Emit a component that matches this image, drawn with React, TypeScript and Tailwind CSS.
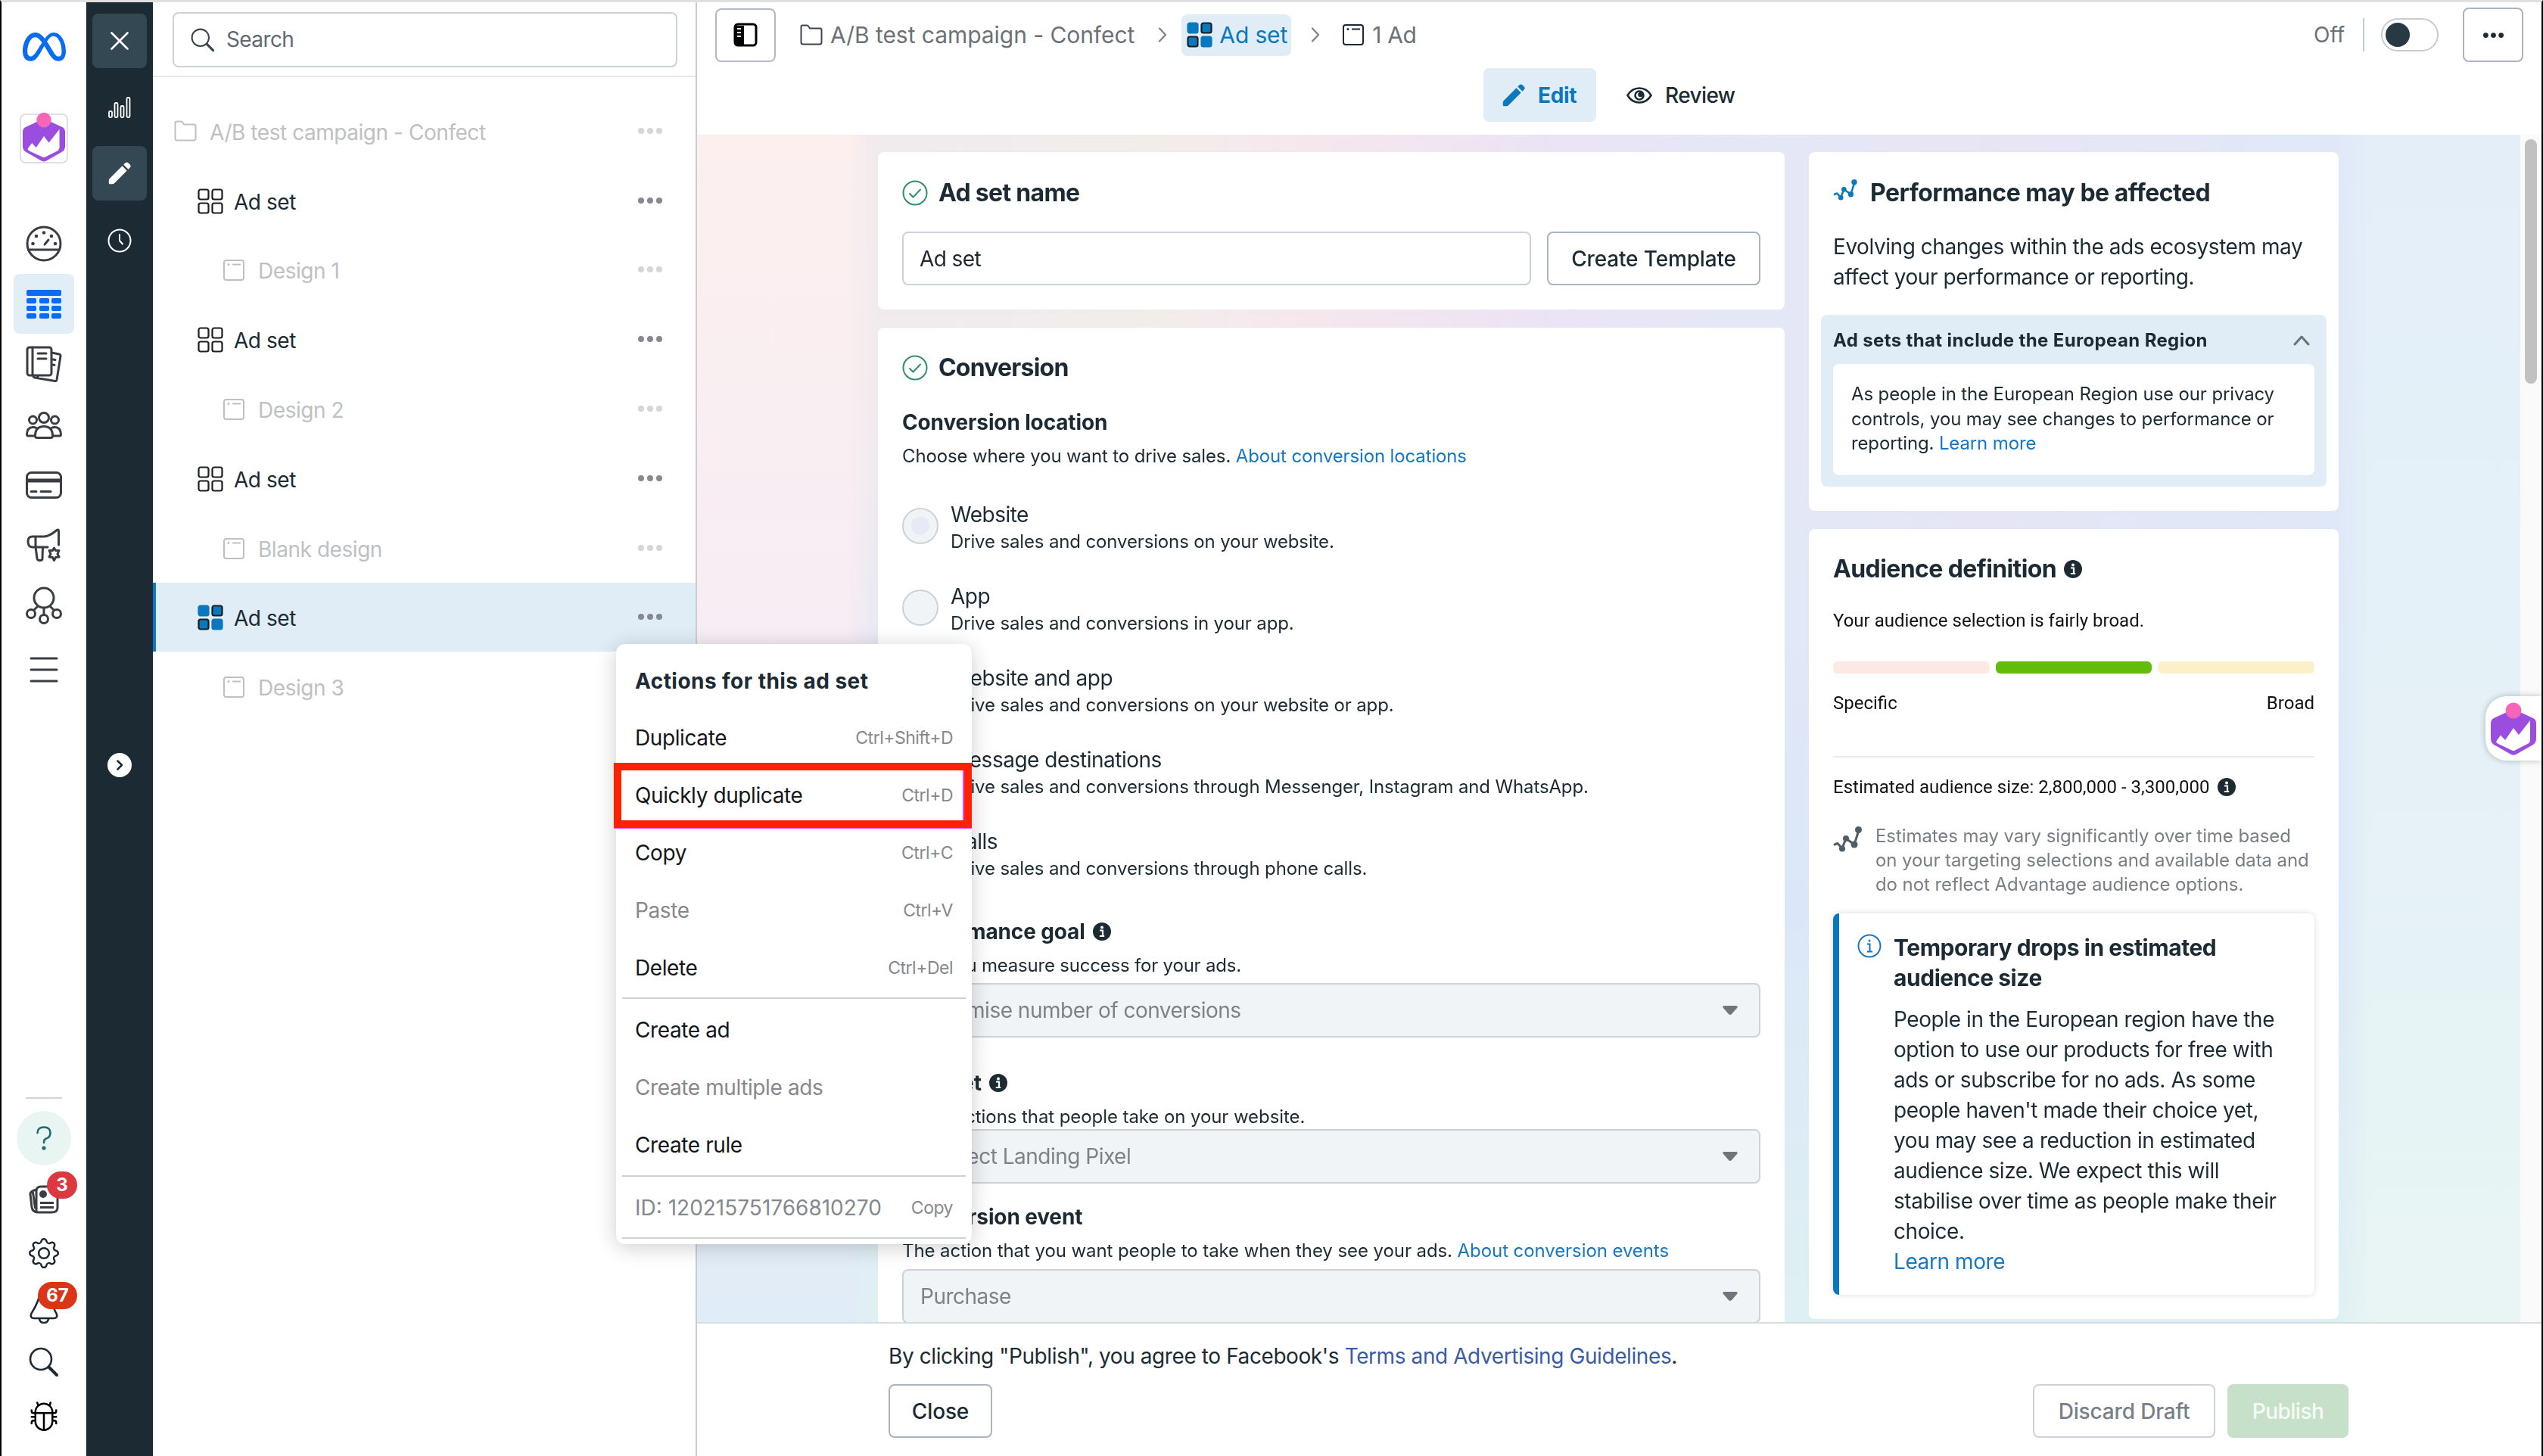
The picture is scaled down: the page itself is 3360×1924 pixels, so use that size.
import type { ReactNode } from 'react'
import { BsBug, BsGear } from 'react-icons/bs'
import { FaMeta } from 'react-icons/fa6'
import { clsx } from 'clsx'

const campaignTree = [
  { label: 'A/B test campaign - Confect', level: 0, type: 'campaign' },
  { label: 'Ad set', level: 1, type: 'adset' },
  { label: 'Design 1', level: 2, type: 'ad' },
  { label: 'Ad set', level: 1, type: 'adset' },
  { label: 'Design 2', level: 2, type: 'ad' },
  { label: 'Ad set', level: 1, type: 'adset' },
  { label: 'Blank design', level: 2, type: 'ad' },
  { label: 'Ad set', level: 1, type: 'adset', selected: true },
  { label: 'Design 3', level: 2, type: 'ad' },
]

const locations = [
  { label: 'Website', text: 'Drive sales and conversions on your website.', checked: true },
  { label: 'App', text: 'Drive sales and conversions in your app.' },
  { label: 'Website and app', text: 'Drive sales and conversions on your website or app.' },
  { label: 'Message destinations', text: 'Drive sales and conversions through Messenger, Instagram and WhatsApp.' },
  { label: 'Calls', text: 'Drive sales and conversions through phone calls.' },
]

/* Icons */

function ConfectLogo({ className }: { className?: string }) {
  return (
    <svg viewBox="0 0 60 70" className={className}>
      <path d="M30 9 L56 21 Q60 23 60 28 V48 Q60 53 56 56 L34 68.500 Q30 71 26 68.500 L4 56 Q0 53 0 48 V28 Q0 23 4 21 Z" fill="#9a4ddf" />
      <path d="M7 52 L13 43.500 L19 50 L30 34 L37 43 L52 24 V50 Q52 53 49.500 54.500 L32 63.500 Q30 64.500 28 63.500 L10 55 Q7.500 54 7 52Z" fill="#fff" />
      <circle cx="30" cy="11" r="10.500" fill="#f765b8" />
    </svg>
  )
}

function FolderIcon({ className }: { className?: string }) {
  return (
    <svg viewBox="0 0 30 28" fill="none" stroke="currentColor" strokeWidth="2" strokeLinejoin="round" className={className}>
      <path d="M1.500 24 V3.500 Q1.500 1.500 3.500 1.500 H9 Q10.500 1.500 11 2.500 L13 5.500 H26.500 Q28.500 5.500 28.500 7.500 V24 Q28.500 26.500 26 26.500 H4 Q1.500 26.500 1.500 24Z" />
    </svg>
  )
}

function GridIcon({ active, className }: { active?: boolean; className?: string }) {
  const blue = active ? '#0a78be' : 'none'
  const edge = active ? '#0a78be' : '#1c1e21'
  return (
    <svg viewBox="0 0 34 34" strokeWidth="2.200" className={className}>
      <rect x="1.500" y="1.500" width="13" height="13" rx="2.500" fill={blue} stroke={edge} />
      <rect x="19.500" y="1.500" width="13" height="13" rx="2.500" fill={blue} stroke="#1c1e21" />
      <rect x="1.500" y="19.500" width="13" height="13" rx="2.500" fill={blue} stroke="#1c1e21" />
      <rect x="19.500" y="19.500" width="13" height="13" rx="2.500" fill={blue} stroke={edge} />
    </svg>
  )
}

function AdIcon({ className }: { className?: string }) {
  return (
    <svg viewBox="0 0 28 28" fill="none" stroke="currentColor" strokeWidth="2" className={className}>
      <rect x="1" y="1" width="26" height="26" rx="3" />
      <path d="M12 6.500 H23" />
      <circle cx="7" cy="6.500" r="1.500" fill="currentColor" stroke="none" />
    </svg>
  )
}

function PencilIcon({ className }: { className?: string }) {
  return (
    <svg viewBox="0 0 30 30" fill="currentColor" className={className}>
      <path d="M22.500 1.300 Q24.500 -0.500 26.500 1.300 L28.700 3.500 Q30.500 5.500 28.700 7.500 L26.500 9.700 L20.300 3.500Z" />
      <path d="M18.500 5.300 L24.700 11.500 L8 28.200 Q7 29.200 5.500 29.200 H2 Q0.800 29.200 0.800 28 V24.500 Q0.800 23 1.800 22Z" />
    </svg>
  )
}

function Dots({ className }: { className?: string }) {
  return (
    <svg viewBox="0 0 32 8" fill="currentColor" className={className}>
      <circle cx="4" cy="4" r="4" />
      <circle cx="16" cy="4" r="4" />
      <circle cx="28" cy="4" r="4" />
    </svg>
  )
}

function SearchIcon({ className }: { className?: string }) {
  return (
    <svg viewBox="0 0 40 40" fill="none" stroke="currentColor" strokeLinecap="round" className={className}>
      <circle cx="16" cy="16" r="14" strokeWidth="2.600" />
      <path d="M26.500 26.500 L37 37" strokeWidth="4" />
    </svg>
  )
}

function CheckCircle() {
  return (
    <svg viewBox="0 0 34 34" fill="none" stroke="#2f8f68" strokeWidth="2" strokeLinecap="round" className="size-[34px]">
      <circle cx="17" cy="17" r="15.500" />
      <path d="M10 18 L14.500 22.500 L24 12.500" />
    </svg>
  )
}

function InfoDot() {
  return (
    <svg viewBox="0 0 24 24" className="size-6 shrink-0">
      <circle cx="12" cy="12" r="12" fill="#1c2b33" />
      <circle cx="12" cy="6.500" r="2" fill="#fff" />
      <path d="M9 10.500 H13 V17.500 M8.800 18 H15.200" stroke="#fff" strokeWidth="2.200" fill="none" />
    </svg>
  )
}

function TrendIcon({ className }: { className?: string }) {
  return (
    <svg viewBox="0 0 38 34" fill="none" stroke="currentColor" strokeWidth="3" strokeLinecap="round" strokeLinejoin="round" className={className}>
      <path d="M2 24 L6 22.500 L12 29 L17 16 L28 24 L34 5" />
      <g fill="currentColor" stroke="none">
        <circle cx="12" cy="29.500" r="4" />
        <circle cx="17" cy="16" r="4" />
        <circle cx="28" cy="24" r="4.500" />
        <circle cx="33.500" cy="4.500" r="4.500" />
      </g>
    </svg>
  )
}

function Line({ box, className, children }: { box: string; className?: string; children: ReactNode }) {
  return (
    <svg viewBox={box} fill="none" stroke="#3a3d41" strokeWidth="3" strokeLinecap="round" strokeLinejoin="round" className={className}>
      {children}
    </svg>
  )
}

/* Global navigation, left edge */

function GlobalRail() {
  return (
    <div className="flex w-28 shrink-0 flex-col items-center bg-white">
      <FaMeta className="mt-[36px] h-[46px] w-[57px] text-[#0a6cf0]" />
      <div className="mt-[65px] flex h-[66px] w-[64px] items-end justify-center rounded-lg border-2 border-[#dddfe2]">
        <ConfectLogo className="h-[66px] w-[56px] shrink-0" />
      </div>
      <Line box="0 0 48 48" className="mt-[82px] size-12">
        <circle cx="24" cy="24" r="22" />
        <path d="M4 32 H44 M25 25 L30 19" />
        <g fill="#3a3d41" stroke="none">
          <circle cx="9.500" cy="24" r="2.300" />
          <circle cx="14" cy="14" r="2.300" />
          <circle cx="24" cy="9.500" r="2.300" />
          <circle cx="34" cy="14" r="2.300" />
          <circle cx="39" cy="24" r="2.300" />
        </g>
      </Line>
      <div className="mt-4 flex h-[79px] w-20 items-center justify-center rounded-lg bg-[#e1edf7]">
        <svg viewBox="0 0 46 38" fill="#0a6cf0" className="h-[38px] w-[46px]">
          <rect width="46" height="8" rx="2" />
          {[11, 21, 31].map((y) =>
            [0, 17, 33].map((x) => <rect key={`${x}-${y}`} x={x} y={y} width="13" height="7" rx="2" />)
          )}
        </svg>
      </div>
      <Line box="0 0 48 48" className="mt-4 size-12">
        <rect x="2" y="2" width="32" height="37" rx="3" />
        <path d="M9 2 V39 M16 10 H27 M16 17 H27 M34 9 L44 11 Q46 11.500 46 13.500 L41 45 Q40.500 47 38.500 46.500 L12 42 Q10 41.500 10 39 M16 40 V42 M36 18 L39 18.500 M36 25 L38 25.500" />
      </Line>
      <Line box="0 0 48 36" className="mt-[39px] h-9 w-12">
        <circle cx="24" cy="8" r="6.500" />
        <circle cx="9.500" cy="11" r="5" />
        <circle cx="38.500" cy="11" r="5" />
        <path d="M15 34.500 Q12.500 34.500 12.500 32 Q12.500 19.500 24 19.500 Q35.500 19.500 35.500 32 Q35.500 34.500 33 34.500Z" />
        <path d="M12 32 H3.500 Q1.500 32 1.500 30 Q2 20.500 9.500 20.500 Q12 20.500 14 21.500 M36 32 H44.500 Q46.500 32 46.500 30 Q46 20.500 38.500 20.500 Q36 20.500 34 21.500" />
      </Line>
      <Line box="0 0 48 36" className="mt-[43px] h-9 w-12">
        <rect x="1.500" y="1.500" width="45" height="33" rx="6" />
        <path d="M2 12 H46" strokeWidth="5" strokeLinecap="butt" />
        <path d="M7 26.500 H14 M20 26.500 H33" />
      </Line>
      <Line box="0 0 48 44" className="mt-[39px] h-11 w-12">
        <path d="M43.500 22 V4 Q43.500 1 41 2.500 Q31 11 24 11 H9 Q3 11 3 17.500 Q3 25 9 25 H29 M13 11 V25 L15 40 Q15.500 42.500 18 42.500 H19.500 Q22 42.500 22 40 L22.500 25" />
        <path d="M37.500 26 L39.500 29.500 L44 29.500 L42 34 L44 38 L39.500 38.500 L37.500 42.500 L35.500 38.500 L31 38 L33 34 L31 29.500 L35.500 29.500Z" />
      </Line>
      <Line box="0 0 48 50" className="mt-[33px] h-[50px] w-12">
        <circle cx="24" cy="15" r="13" />
        <circle cx="7" cy="36" r="5.500" />
        <circle cx="24" cy="43" r="5.500" />
        <circle cx="41" cy="36" r="5.500" />
        <path d="M24 28 V37 M16 26 L10.500 31.500 M32 26 L37.500 31.500" />
      </Line>
      <Line box="0 0 38 34" className="mt-[43px] h-[34px] w-[38px]">
        <path d="M2 2 H36 M2 17 H36 M2 32 H36" />
      </Line>

      <div className="mt-auto h-0.5 w-12 bg-[#ced6dc]" />
      <div className="mt-4 flex size-[72px] items-center justify-center rounded-full bg-[#e8f5f2]">
        <Line box="0 0 20 32" className="h-8 w-5">
          <path d="M1.500 9 Q1.500 1.500 10 1.500 Q18.500 1.500 18.500 9 Q18.500 15 13 16.500 Q10 17.500 10 22" stroke="#1f6b70" strokeWidth="2.600" />
          <circle cx="10" cy="29" r="2.600" fill="#1f6b70" stroke="none" />
        </Line>
      </div>
      <div className="relative mt-[26px]">
        <Line box="0 0 40 38" className="h-[38px] w-10">
          <path d="M16 2 H33 Q38 2 38 7 V30 Q38 36 30 36 H12 Q10 36 10 33 V8 Q10 2 16 2 M10 6 Q2 8 2 12 L4 29 Q5 36 12 36 M5.500 10 L8.500 30" />
          <circle cx="19" cy="12" r="5" fill="#3a3d41" stroke="none" />
          <path d="M15 23.500 H33 M15 29.500 H33" strokeLinecap="butt" />
        </Line>
        <span className="absolute -top-[18px] left-[24px] flex h-9 w-10 items-center justify-center rounded-full bg-[#dc3840] text-[24px] font-bold text-white">3</span>
      </div>
      <BsGear className="mt-[32px] size-10 text-[#1c2b33]" />
      <div className="relative mt-[31px]">
        <Line box="0 0 40 42" className="h-[42px] w-10">
          <path d="M12 12 Q9 20 5 26 Q2 30 3 33 Q4 35 7 35 H33 Q36 35 37 33 Q38 30 35 26 Q32 20 30 12 Q26 3 20 3 Q14 3 12 12 M14 36 Q15 41 20 41 Q25 41 26 36" stroke="#1c2b33" strokeWidth="2.600" />
        </Line>
        <span className="absolute -top-[13px] left-[12px] flex h-9 w-[52px] items-center justify-center rounded-full bg-[#da3519] text-[24px] font-bold text-white">67</span>
      </div>
      <SearchIcon className="mt-[31px] size-10 text-[#1c2b33]" />
      <BsBug className="mt-[31px] mb-[33px] size-10 text-black" />
    </div>
  )
}

/* Editor view switcher */

function EditorRail() {
  return (
    <div className="flex w-22 shrink-0 flex-col items-center bg-[#1c2b33] text-white">
      <div className="mt-[15px] flex size-[72px] items-center justify-center rounded-lg bg-[#344854]">
        <svg viewBox="0 0 24 24" stroke="currentColor" strokeWidth="2.600" strokeLinecap="round" className="size-6">
          <path d="M1.500 1.500 L22.500 22.500 M22.500 1.500 L1.500 22.500" />
        </svg>
      </div>
      <svg viewBox="0 0 30 28" fill="none" stroke="currentColor" strokeWidth="1.800" className="mt-[38px] h-7 w-[30px]">
        <rect x="1" y="19" width="4" height="8" rx="1.500" />
        <rect x="8.500" y="8" width="4" height="19" rx="1.500" />
        <rect x="16.500" y="12" width="4" height="15" rx="1.500" />
        <rect x="24.500" y="1" width="4" height="26" rx="1.500" />
      </svg>
      <div className="mt-[37px] flex size-[72px] items-center justify-center rounded-lg bg-[#344854]">
        <PencilIcon className="size-[30px]" />
      </div>
      <svg viewBox="0 0 32 32" fill="none" stroke="currentColor" strokeWidth="2" strokeLinecap="round" className="mt-[37px] size-8">
        <circle cx="16" cy="16" r="14.500" />
        <path d="M16 8 V16 L20 20.500" />
      </svg>
      <svg viewBox="0 0 32 32" className="mt-[661px] size-8">
        <circle cx="16" cy="16" r="16" fill="#fff" />
        <path d="M13.500 10.500 L19 16 L13.500 21.500" fill="none" stroke="#1c2b33" strokeWidth="2.500" strokeLinecap="round" strokeLinejoin="round" />
      </svg>
    </div>
  )
}

function CampaignTree() {
  return (
    <div className="w-[719px] shrink-0 border-r-2 border-[#c9ccd1] bg-white">
      <div className="border-b-2 border-[#e6e7e9] px-[26px] pt-[13px] pb-[11px]">
        <div className="flex h-[73px] w-[667px] items-center rounded-lg border-2 border-[#cbd2d9] pl-[22px] text-[#606a71]">
          <SearchIcon className="mr-[15px] size-8 text-[#3a464d]" />
          <span className="pb-0.5 tracking-[-0.6px]">Search</span>
        </div>
      </div>
      <div className="pt-[25px]">
        {campaignTree.map((item, i) => (
          <div
            key={i}
            className={clsx(
              'flex h-[91.8px] items-center border-l-4 pr-[44px]',
              item.selected ? 'border-[#0a78be] bg-[#e0edf6]' : 'border-transparent',
              item.level === 0 && 'pl-[24px]',
              item.level === 1 && 'pl-[55px]',
              item.level === 2 && 'pl-[89px]',
              item.type === 'adset' ? 'text-[#1c2b33]' : 'text-[#bdc1c4]'
            )}
          >
            {item.type === 'campaign' && <FolderIcon className="mr-[17px] h-7 w-[30px]" />}
            {item.type === 'adset' && <GridIcon active={item.selected} className="mt-0.5 mr-[14px] size-[34px]" />}
            {item.type === 'ad' && <AdIcon className="mt-0.5 mr-[18px] size-[28px]" />}
            <span className="pt-1 tracking-[-0.45px]">{item.label}</span>
            <Dots className={clsx('ml-auto h-2 w-8', item.type === 'adset' ? 'text-[#848a8f]' : 'text-[#d4d6d8]')} />
          </div>
        ))}
      </div>
    </div>
  )
}

function MenuItem({ label, hint, muted }: { label: string; hint?: string; muted?: boolean }) {
  return (
    <div className={clsx('flex h-[76px] items-center justify-between px-[25px] tracking-[-0.4px]', muted ? 'text-[#85898d]' : 'text-[#14171a]')}>
      <span>{label}</span>
      {hint && <span className="text-[23px] tracking-[-0.5px] text-[#85898d]">{hint}</span>}
    </div>
  )
}

function ContextMenu() {
  return (
    <div className="absolute top-[848px] left-[812px] z-20 h-[793px] w-[470px] rounded-xl bg-white shadow-[0_4px_28px_rgba(0,0,0,0.2)]">
      <div className="flex h-[86px] items-center px-[25px] pt-3 font-bold tracking-[0.45px] text-[#1c2b33]">Actions for this ad set</div>
      <MenuItem label="Duplicate" hint="Ctrl+Shift+D" />
      <MenuItem label="Quickly duplicate" hint="Ctrl+D" />
      <MenuItem label="Copy" hint="Ctrl+C" />
      <MenuItem label="Paste" hint="Ctrl+V" muted />
      <MenuItem label="Delete" hint="Ctrl+Del" />
      <div className="mx-2 mt-px mb-[3px] h-0.5 bg-[#cfd2d5]" />
      <MenuItem label="Create ad" />
      <MenuItem label="Create multiple ads" muted />
      <MenuItem label="Create rule" />
      <div className="mx-2 mt-[2px] mb-[3px] h-0.5 bg-[#cfd2d5]" />
      <div className="flex h-[76px] items-center justify-between px-[25px] text-[#85898d]">
        <span>ID: 120215751766810270</span>
        <span className="text-[23px] tracking-[-0.5px]">Copy</span>
      </div>
      <div className="mx-2 mt-px h-0.5 bg-[#cfd2d5]" />
      <div className="absolute top-[157px] -left-[3px] h-[86px] w-[473px] border-[10px] border-[#ff2200] shadow-[0_1px_0_#ff40ff]">
        <div className="size-full border-r-2 border-[#ff40ff]" />
      </div>
    </div>
  )
}

function Crumb() {
  return (
    <svg viewBox="0 0 12 20" fill="none" stroke="#7b8187" strokeWidth="2.200" strokeLinecap="round" strokeLinejoin="round" className="h-5 w-3">
      <path d="M2 1.500 L10 10 L2 18.500" />
    </svg>
  )
}

function TopBar() {
  return (
    <div className="h-[175px] shrink-0 bg-white">
      <div className="flex h-[79px] items-center pt-[7px] pr-6 pl-6 text-[30px] tracking-[-0.05px] text-[#6a7278]">
        <div className="flex h-[71px] w-[80px] items-center justify-center rounded-lg border-2 border-[#b0b9c4]">
          <svg viewBox="0 0 32 32" className="size-8">
            <rect x="2" y="2" width="28" height="28" rx="4" fill="#fff" stroke="#000" strokeWidth="3" />
            <path d="M2 4 H14 V29 H5 Q2 29 2 26Z" fill="#000" />
            <path d="M5 8 H10 M5 13 H10 M5 18 H10" stroke="#fff" strokeWidth="2" />
          </svg>
        </div>
        <FolderIcon className="mr-[10px] ml-[32px] h-7 w-[30px] text-[#3a464d]" />
        <span>A/B test campaign - Confect</span>
        <div className="ml-[31px]">
          <Crumb />
        </div>
        <div className="mr-[26px] ml-[19px] flex h-[55px] w-[145px] items-center gap-[9px] rounded-lg bg-[#e0edf6] pl-[7px] tracking-[-0.15px] whitespace-nowrap text-[#0a78be]">
          <GridIcon active className="size-[34px]" />
          Ad set
        </div>
        <Crumb />
        <AdIcon className="mr-[11px] ml-[30px] size-[28px] text-[#1c2b33]" />
        <span className="tracking-[-0.4px]">1 Ad</span>
        <span className="ml-auto text-[28px]">Off</span>
        <div className="ml-[24px] h-11 w-0.5 bg-[#c5ccd3]" />
        <div className="ml-[22px] flex h-[44px] w-[76px] items-center rounded-full border-2 border-[#c5ccd3] pl-1">
          <div className="size-8 rounded-full bg-[#283943]" />
        </div>
        <div className="ml-8 flex h-[72px] w-[80px] items-center justify-center rounded-lg border-2 border-[#a9b4c0]">
          <Dots className="h-[7px] w-[27px] text-[#1c2b33]" />
        </div>
      </div>
      <div className="mt-2 ml-[1039px] flex h-[71px]">
        <div className="flex w-[149px] items-center rounded-lg bg-[#e0edf6] pl-[25px] font-bold tracking-[-0.3px] text-[#0a78be]">
          <PencilIcon className="mr-[17px] size-[30px]" />
          Edit
        </div>
        <div className="flex items-center pl-[40px] font-medium tracking-[-0.6px] text-[#1c2b33]">
          <svg viewBox="0 0 34 22" fill="none" stroke="currentColor" strokeWidth="2.600" className="mr-[17px] h-[22px] w-[34px]">
            <path d="M1.500 11 Q7 1.500 17 1.500 Q27 1.500 32.500 11 Q27 20.500 17 20.500 Q7 20.500 1.500 11Z" />
            <circle cx="17" cy="11" r="5.500" />
            <circle cx="18.500" cy="10" r="2" fill="currentColor" />
          </svg>
          Review
        </div>
      </div>
    </div>
  )
}

function Select({ value, className }: { value: string; className?: string }) {
  return (
    <div className={clsx('flex h-[72px] shrink-0 items-center justify-between rounded-lg border-2 border-[#cbd2d9] bg-[#f1f4f7] pr-[28px] pl-[22px] text-[28px] tracking-[-0.5px] text-[#7c8388]', className)}>
      {value}
      <svg viewBox="0 0 20 12" fill="#6f767b" className="h-3 w-5">
        <path d="M2 0 H18 Q21 0.500 19 3 L12 11 Q10 13 8 11 L1 3 Q-1 0.500 2 0Z" />
      </svg>
    </div>
  )
}

function AdSetForm() {
  return (
    <div className="flex w-[1198px] flex-col gap-6 text-[#1c2b33]">
      <div className="h-[208px] shrink-0 rounded-lg bg-white px-8 pt-6">
        <div className="flex h-[60px] items-center gap-[14px] text-[32px] font-bold tracking-[-0.7px]">
          <CheckCircle />
          Ad set name
        </div>
        <div className="mt-[21px] flex h-[71px] gap-[21px] text-[28px]">
          <div className="flex w-[831px] items-center rounded-lg border-2 border-[#cbd2d9] pl-[21px] tracking-[-0.6px]">Ad set</div>
          <div className="flex w-[282px] items-center justify-center rounded-lg border-2 border-[#a9b4c0] font-medium tracking-[-0.15px]">Create Template</div>
        </div>
      </div>

      <div className="flex flex-col rounded-t-lg bg-white pt-[23px] pr-8 pl-[32px] text-[24px] leading-8 tracking-[-0.14px]">
        <div className="flex h-[60px] shrink-0 items-center gap-[14px] text-[32px] font-bold tracking-[-0.8px]">
          <CheckCircle />
          Conversion
        </div>
        <h3 className="mt-[22px] text-[28px] leading-10 font-bold">Conversion location</h3>
        <p className="mt-[9px]">
          Choose where you want to drive sales. <a className="text-[#1877c2]">About conversion locations</a>
        </p>
        <div className="mt-[41px] flex flex-col gap-9">
          {locations.map((l) => (
            <div key={l.label} className="flex h-[72px] gap-4">
              <div className="mt-[11px] flex size-12 items-center justify-center rounded-full border-2 border-[#cbd2d9] bg-[#f1f4f7]">
                {l.checked && <div className="size-6 rounded-full bg-[#e6eaf5]" />}
              </div>
              <div>
                <div className="text-[28px] leading-10 tracking-[-0.5px]">{l.label}</div>
                <div>{l.text}</div>
              </div>
            </div>
          ))}
        </div>
        <h3 className="mt-[47px] flex items-center gap-[10px] text-[28px] leading-10 font-bold">
          Performance goal <InfoDot />
        </h3>
        <p className="mt-[9px] tracking-[-0.2px]">How you measure success for your ads.</p>
        <Select value="Maximise number of conversions" className="mt-[7px]" />
        <h3 className="mt-10 flex items-center gap-[10px] text-[28px] leading-10 font-bold">
          Dataset <InfoDot />
        </h3>
        <p className="mt-[9px] tracking-[-0.08px]">Track actions that people take on your website.</p>
        <Select value="Confect Landing Pixel" />
        <h3 className="mt-6 text-[28px] leading-10 font-bold">Conversion event</h3>
        <p className="mt-[9px] tracking-[-0.08px]">
          The action that you want people to take when they see your ads. <a className="text-[#1877c2]">About conversion events</a>
        </p>
        <Select value="Purchase" className="mt-2" />
      </div>
    </div>
  )
}

function Insights() {
  return (
    <div className="flex w-[700px] flex-col gap-6 text-[#1c2b33]">
      <div className="h-[474px] shrink-0 rounded-lg bg-white px-4 pt-8">
        <div className="flex h-11 items-center gap-[17px] pl-[16px] text-[32px] font-bold tracking-[-0.5px]">
          <TrendIcon className="-mt-2 h-[28px] w-[32px] text-[#0a78be]" />
          Performance may be affected
        </div>
        <p className="mt-[29px] pl-[16px] leading-10 tracking-[-0.45px]">
          Evolving changes within the ads ecosystem may
          <br />
          affect your performance or reporting.
        </p>
        <div className="mt-[30px] h-[227px] rounded-lg bg-[#e0edf6] px-4 text-[24px]">
          <div className="flex h-[65px] items-center justify-between pt-0.5 pr-[6px] font-bold tracking-[0.36px]">
            Ad sets that include the European Region
            <svg viewBox="0 0 22 14" fill="none" stroke="#6a7278" strokeWidth="3" strokeLinecap="round" strokeLinejoin="round" className="h-[14px] w-[22px]">
              <path d="M2 12 L11 2 L20 12" />
            </svg>
          </div>
          <p className="h-[147px] rounded-lg bg-white pt-[24px] pl-[24px] leading-[32.600px] tracking-[-0.13px]">
            As people in the European Region use our privacy
            <br />
            controls, you may see changes to performance or
            <br />
            reporting. <a className="text-[#1877c2]">Learn more</a>
          </p>
        </div>
      </div>

      <div className="h-[1044px] shrink-0 rounded-lg bg-white px-8 pt-[31px]">
        <div className="flex h-11 items-center gap-[10px] text-[32px] font-bold tracking-[-0.6px]">
          Audience definition <InfoDot />
        </div>
        <div className="font-['Roboto',sans-serif] text-[24px] leading-8 text-[#0f1417]">
          <p className="mt-[30px]">Your audience selection is fairly broad.</p>
          <div className="mt-[38px] flex gap-2">
            <div className="h-4 flex-1 rounded-md bg-[#fde9e3]" />
            <div className="h-4 flex-1 rounded-md bg-[#62bd0b]" />
            <div className="h-4 flex-1 rounded-md bg-[#fdefc8]" />
          </div>
          <div className="mt-[23px] flex justify-between">
            <span>Specific</span>
            <span>Broad</span>
          </div>
          <div className="mt-[54px] h-0.5 bg-[#e9eaec]" />
          <div className="mt-[23px] flex items-center gap-[11px]">
            Estimated audience size: 2,800,000 - 3,300,000 <InfoDot />
          </div>
        </div>
        <div className="mt-[33px] flex gap-[18px] text-[24px] leading-8 tracking-[-0.08px] text-[#788087]">
          <TrendIcon className="mt-[3px] h-[34px] w-[38px] shrink-0 text-[#4f5d66]" />
          <p className="whitespace-nowrap">
            Estimates may vary significantly over time based
            <br />
            on your targeting selections and available data and
            <br />
            do not reflect Advantage audience options.
          </p>
        </div>
        <div className="mt-[22px] flex h-[504px] rounded-lg border-l-8 border-[#0a78be] pt-[25px] pl-[24px] shadow-[0_0_8px_rgba(0,0,0,0.14)]">
          <svg viewBox="0 0 32 32" fill="none" stroke="#1877c2" strokeWidth="2" className="mt-[2px] mr-[16px] size-8 shrink-0">
            <circle cx="16" cy="16" r="14.500" />
            <path d="M13 13.500 H16.500 V23 M13 23.500 H20" />
            <circle cx="16" cy="9" r="1.500" fill="#1877c2" stroke="none" />
          </svg>
          <div className="whitespace-nowrap">
            <div className="text-[30px] leading-10 font-bold tracking-[-0.45px]">
              Temporary drops in estimated
              <br />
              audience size
            </div>
            <p className="mt-[15px] leading-10 tracking-[-0.42px]">
              People in the European region have the
              <br />
              option to use our products for free with
              <br />
              ads or subscribe for no ads. As some
              <br />
              people haven't made their choice yet,
              <br />
              you may see a reduction in estimated
              <br />
              audience size. We expect this will
              <br />
              stabilise over time as people make their
              <br />
              choice.
              <br />
              <a className="text-[#1877c2]">Learn more</a>
            </p>
          </div>
        </div>
      </div>
    </div>
  )
}

function Footer() {
  return (
    <div className="h-[177px] shrink-0 border-t-2 border-[#d5dce2] bg-white pt-[23px] pr-[255px] pl-[253px] text-[#1c2b33]">
      <p className="leading-10 tracking-[-0.41px]">
        By clicking "Publish", you agree to Facebook's <a className="text-[#3b5ba5]">Terms and Advertising Guidelines</a>.
      </p>
      <div className="mt-[17px] flex h-[71px] font-medium tracking-[-0.15px]">
        <div className="flex w-[137px] items-center justify-center rounded-lg border-2 border-[#a9b4c0]">Close</div>
        <div className="mr-4 ml-auto flex w-[241px] items-center justify-center rounded-lg border-2 border-[#cbd2d9] text-[#788087]">Discard Draft</div>
        <div className="flex w-[160px] items-center justify-center rounded-lg bg-[#c7e0ca] tracking-[-0.5px] text-[#f5fbf5]">Publish</div>
      </div>
    </div>
  )
}

export default function App() {
  return (
    <div className="relative flex h-[1924px] w-[3360px] overflow-hidden border-x-2 border-t-[3px] border-x-black border-t-[#e0e0e0] bg-white font-['Inter',sans-serif] text-[28px] leading-none">
      <GlobalRail />
      <EditorRail />
      <CampaignTree />
      <div className="flex min-w-0 flex-1 flex-col">
        <TopBar />
        <div className="flex min-h-0 flex-1 overflow-hidden">
          <div className="w-[239px] shrink-0 bg-linear-to-b from-[#fcefee] via-[#f6edf5] via-50% to-[#e0ecf7]" />
          {/* backdrop fades into the side strips just outside the cards */}
          <div className="z-10 -mr-[40px] -ml-10 flex w-[2010px] shrink-0 gap-8 bg-[linear-gradient(to_bottom,transparent_25%,#dbe7f8_65%,#def0f2_100%),linear-gradient(to_right,#f0eaee,#f2ede9_20%,#f6e7ed_30%,#ebe3f5_46%,#e4e8f6_58%,#e7e5f4_75%,#dfe8f8)] mask-[linear-gradient(to_right,transparent,black_38px,black_1970px,transparent)] pt-[23px] pl-10">
            <AdSetForm />
            <Insights />
          </div>
          <div className="flex-1 bg-linear-to-b from-[#e3eef9] via-[#e5f1f7] via-50% to-[#e8f5f3]" />
          <div className="w-7 shrink-0 bg-[#fafafa] pt-[6px] pl-[6px]">
            <div className="h-[323px] w-4 rounded-full bg-[#c1c1c1]" />
          </div>
        </div>
        <Footer />
      </div>
      <ContextMenu />
      <div className="absolute top-[917px] right-0 z-10 flex h-[85px] w-[74px] items-center rounded-l-[28px] bg-white pl-[7px] shadow-[0_0_8px_rgba(0,0,0,0.25)]">
        <ConfectLogo className="h-[70px] w-[60px]" />
      </div>
    </div>
  )
}
